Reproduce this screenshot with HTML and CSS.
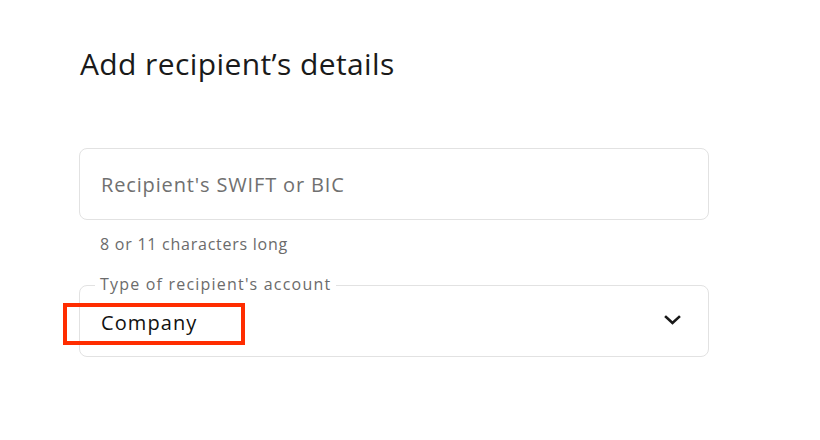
FILE: index.html
```html
<!DOCTYPE html>
<html>
<head>
<meta charset="utf-8">
<link rel="stylesheet" href="styles.css">
</head>
<body>
<main class="page">
  <h1 class="title">Add recipient’s details</h1>
  <div class="field">
    <div class="input">Recipient's SWIFT or BIC</div>
    <div class="hint">8 or 11 characters long</div>
  </div>
  <div class="select-wrap">
    <div class="select">
      <span class="value">Company</span>
      <svg class="chev" width="17" height="10" viewBox="0 0 17 10"><path d="M2 2 L8.5 8 L15 2" fill="none" stroke="#191919" stroke-width="2.6" stroke-linecap="square"/></svg>
    </div>
    <span class="legend">Type of recipient's account</span>
    <div class="highlight"></div>
  </div>
</main>
</body>
</html>
```
FILE: styles.css
```css
html, body { margin: 0; padding: 0; background: #fff; }
body { font-family: "Open Sans", "Noto Sans", sans-serif; color: #191919; }
.page { width: 630px; padding: 44px 0 0 79px; }
.title { margin: 0 0 0 1px; font-size: 30px; font-weight: 400; line-height: 40px; letter-spacing: 0.4px; color: #1a1a1a; }
.field { margin-top: 64px; }
.input { border: 1px solid #e2e2e2; border-radius: 8px; box-sizing: border-box; height: 72px; padding-left: 21px; display: flex; align-items: center; font-size: 20px; color: #707070; letter-spacing: 0.85px; }
.hint { margin-top: 13px; padding-left: 21px; font-size: 16px; color: #6b6b6b; line-height: 22px; letter-spacing: 0.75px; }
.select-wrap { position: relative; margin-top: 30px; }
.select { border: 1px solid #e2e2e2; border-radius: 8px; box-sizing: border-box; height: 72px; padding: 2px 27px 0 21px; display: flex; align-items: center; justify-content: space-between; }
.legend { position: absolute; left: 16px; top: -12px; padding: 0 5px; background: #fff; font-size: 16px; color: #6b6b6b; line-height: 22px; letter-spacing: 1.2px; }
.value { font-size: 20px; color: #111; letter-spacing: 1.1px; }
.chev { display: block; margin-top: -4px; }
.highlight { position: absolute; left: -16px; top: 18px; width: 182px; height: 42px; border: 4px solid #ff2d00; box-sizing: border-box; }
```
